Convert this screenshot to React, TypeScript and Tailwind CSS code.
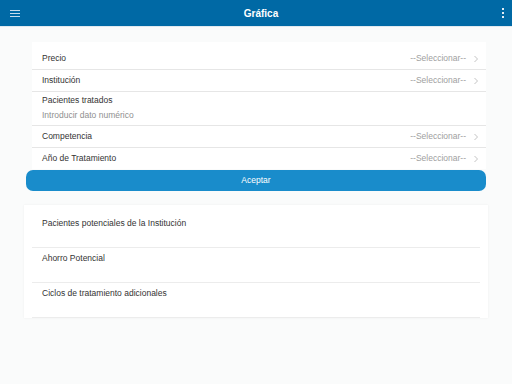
import React from "react";

type Row = {
    label: string
    select?: boolean
    placeholder?: string
};

const rows: Row[] = [
    {label: "Precio", select: true},
    {label: "Institución", select: true},
    {label: "Pacientes tratados", placeholder: "Introducir dato numérico"},
    {label: "Competencia", select: true},
    {label: "Año de Tratamiento", select: true},
];

const results = [
    "Pacientes potenciales de la Institución",
    "Ahorro Potencial",
    "Ciclos de tratamiento adicionales",
];

const Chevron = () => (
    <svg width="6" height="8" viewBox="0 0 6 8" className="ml-[7px]">
        <path d="M1.5 1 L4.5 4 L1.5 7" fill="none" stroke="#c4c4c4" strokeWidth="1"/>
    </svg>
);

const App = () => {
    return (
        <div className="w-[512px] h-[384px] bg-[#fafbfb] text-[#333] overflow-hidden leading-[11px]"
             style={{fontFamily: '"Liberation Sans", Arial, sans-serif'}}>
            <header className="h-[27px] bg-[#0069a5] border-b border-[#dfe9f0] flex items-center justify-between px-[10px]">
                <div className="flex flex-col gap-[2px] w-[10px]">
                    <span className="h-px bg-[#c9dceb]"/>
                    <span className="h-px bg-[#c9dceb]"/>
                    <span className="h-px bg-[#c9dceb]"/>
                </div>
                <h1 className="text-white font-bold text-[10px]">Gráfica</h1>
                <div className="flex flex-col gap-[2px] items-center w-[2px] mr-[-2px]">
                    <span className="w-[2px] h-[2px] bg-[#e2ecf4]"/>
                    <span className="w-[2px] h-[2px] bg-[#e2ecf4]"/>
                    <span className="w-[2px] h-[2px] bg-[#e2ecf4]"/>
                </div>
            </header>

            <div className="ml-[32px] w-[454px] mt-[15px] bg-white pt-[6px]">
                {rows.map((row, i) => (
                    <div key={row.label}
                         className={i < rows.length - 1 ? "border-b border-[#e6e6e6]" : ""}>
                        {row.select ? (
                            <div className="h-[21px] flex items-center justify-between pl-[10px] pr-[7px] text-[8.5px]">
                                <span>{row.label}</span>
                                <span className="flex items-center text-[#a0a0a0]">
                                    --Seleccionar--
                                    <Chevron/>
                                </span>
                            </div>
                        ) : (
                            <div className="h-[33px] pl-[10px] pt-[3px] text-[8.5px] flex flex-col gap-[4px]">
                                <span>{row.label}</span>
                                <span className="text-[#8f8f8f]">{row.placeholder}</span>
                            </div>
                        )}
                    </div>
                ))}
            </div>

            <button className="block ml-[26px] w-[460px] h-[21px] mt-[1px] rounded-[7px] bg-[#198ccb] text-white text-[8.5px]">
                Aceptar
            </button>

            <div className="ml-[24px] w-[464px] mt-[14px] bg-white pt-[8px] shadow-[0_0_2px_rgba(0,0,0,0.06)]">
                {results.map(r => (
                    <div key={r} className="mx-[8px] h-[35px] border-b border-[#ececec] pl-[10px] pt-[5px] text-[8.5px]">
                        {r}
                    </div>
                ))}
            </div>
        </div>
    );
};

export default App;
